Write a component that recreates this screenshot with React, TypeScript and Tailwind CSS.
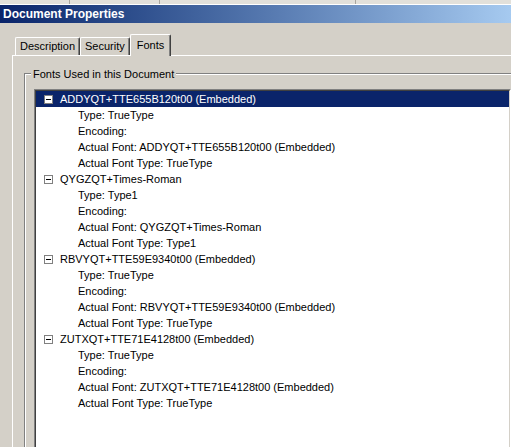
import React from "react";

interface FontEntry {
  name: string;
  type: string;
  actual: string;
  selected?: boolean;
}

const fonts: FontEntry[] = [
  {
    name: "ADDYQT+TTE655B120t00 (Embedded)",
    type: "TrueType",
    actual: "ADDYQT+TTE655B120t00 (Embedded)",
    selected: true,
  },
  { name: "QYGZQT+Times-Roman", type: "Type1", actual: "QYGZQT+Times-Roman" },
  {
    name: "RBVYQT+TTE59E9340t00 (Embedded)",
    type: "TrueType",
    actual: "RBVYQT+TTE59E9340t00 (Embedded)",
  },
  {
    name: "ZUTXQT+TTE71E4128t00 (Embedded)",
    type: "TrueType",
    actual: "ZUTXQT+TTE71E4128t00 (Embedded)",
  },
];

const MinusBox = () => (
  <div className="flex h-[9px] w-[9px] items-center justify-center border border-[#808080] bg-white">
    <div className="h-[1px] w-[5px] bg-black" />
  </div>
);

const Tab = ({ label, active }: { label: string; active?: boolean }) =>
  active ? (
    <div className="relative z-10 -mb-[1px] flex h-[22px] items-center rounded-t-[2px] border-l border-t border-r border-l-white border-t-white border-r-[#404040] bg-[#d4d0c8] px-[6px] shadow-[inset_-1px_0_0_#808080]">
      {label}
    </div>
  ) : (
    <div className="flex h-[18px] items-center rounded-t-[2px] border-l border-t border-r border-l-white border-t-white border-r-[#404040] px-[4px] shadow-[inset_-1px_0_0_#808080]">
      {label}
    </div>
  );

const FontTree = ({ font }: { font: FontEntry }) => {
  const child = "h-[16px] pl-[42px] leading-[16px] text-black";
  return (
    <div className="flex flex-col">
      <div
        className={
          font.selected
            ? "flex h-[16px] items-center bg-[#0a246a] pl-[8px] text-white"
            : "flex h-[16px] items-center pl-[8px] text-black"
        }
      >
        <MinusBox />
        <span className="ml-[7px] leading-[16px]">{font.name}</span>
      </div>
      <div className={child}>Type: {font.type}</div>
      <div className={child}>Encoding:</div>
      <div className={child}>Actual Font: {font.actual}</div>
      <div className={child}>Actual Font Type: {font.type}</div>
    </div>
  );
};

export default function App() {
  return (
    <div className="h-[447px] w-[511px] overflow-hidden bg-[#d4d0c8] font-['Liberation_Sans',Arial,sans-serif] text-[11px] text-black">
      <div className="flex h-[5px] border-b border-white bg-[#e2e0da]">
        <div className="w-[70px] border-r border-[#a8a59e]" />
        <div className="w-[90px] border-r border-[#a8a59e]" />
        <div className="w-[196px] border-r border-[#a8a59e]" />
      </div>
      <div className="flex h-[18px] items-center bg-gradient-to-r from-[#0a246a] to-[#a6caf0] px-[3px] text-[12px] font-bold text-white">
        Document Properties
      </div>

      <div className="pl-[12px] pt-[11px]">
        <div className="flex h-[21px] items-end pl-[3px]">
          <Tab label="Description" />
          <Tab label="Security" />
          <Tab label="Fonts" active />
        </div>

        <div className="w-[520px] border-l border-t border-white pl-[11px] pt-[17px]">
          <div className="relative w-[500px] border-l border-t border-[#808080]">
            <div className="border-l border-t border-white pl-[8px] pt-[14px]">
              <div className="h-[400px] w-[477px] border border-t-[#808080] border-l-[#808080] border-r-white border-b-white">
                <div className="flex h-full flex-col border border-t-[#404040] border-l-[#404040] border-r-[#d4d0c8] border-b-[#d4d0c8] bg-white">
                  {fonts.map((f) => (
                    <FontTree key={f.name} font={f} />
                  ))}
                </div>
              </div>
            </div>
            <div className="absolute -top-[7px] left-[6px] bg-[#d4d0c8] px-[2px] leading-[14px]">
              Fonts Used in this Document
            </div>
          </div>
        </div>
      </div>
    </div>
  );
}
